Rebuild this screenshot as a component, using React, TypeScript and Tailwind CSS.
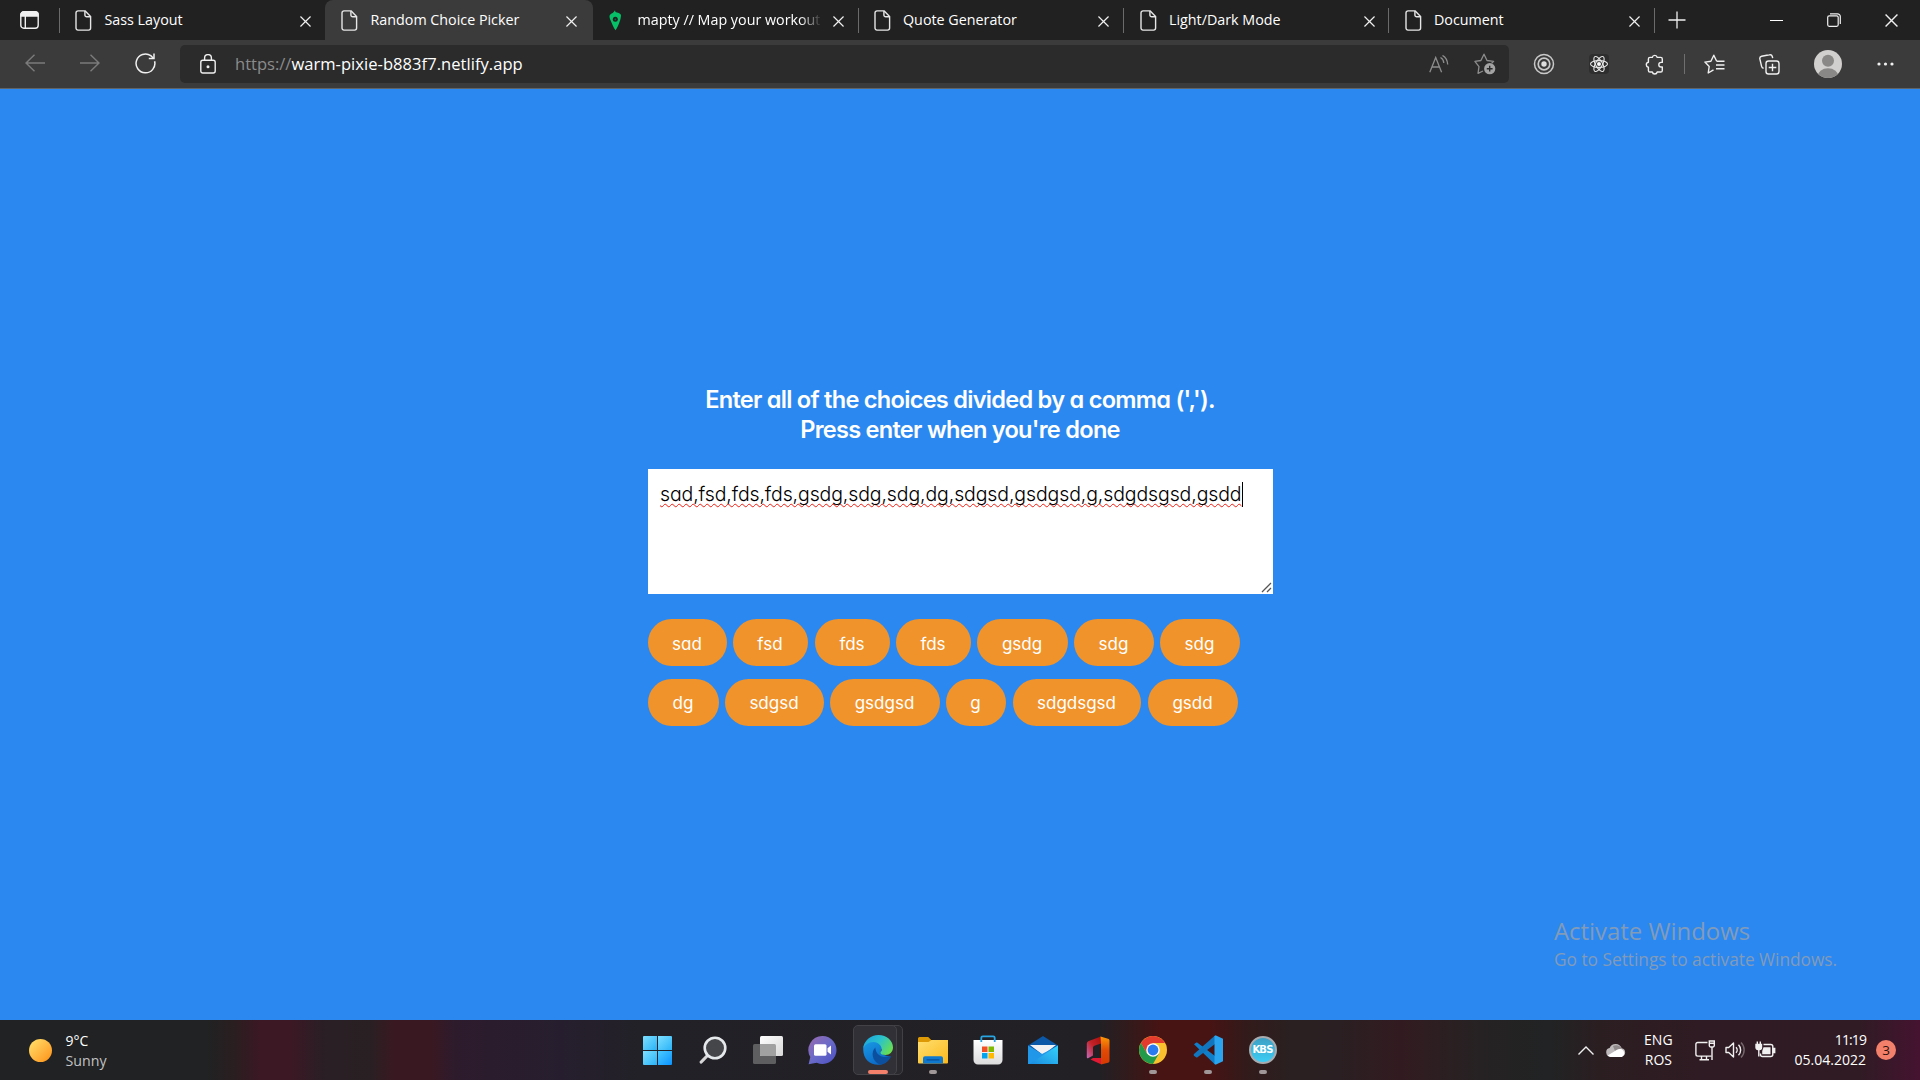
import React from 'react';

const tabs = [
  { title: 'Sass Layout', kind: 'file', box: 'w-[265px] pl-[15px]', divider: false },
  { title: 'Random Choice Picker', kind: 'file', box: 'w-[268px] rounded-t-lg bg-[#3b3b3b] pl-[16px]', divider: false },
  { title: 'mapty // Map your workout', kind: 'pin', box: 'w-[265.500px] pl-[14.500px]', divider: true },
  { title: 'Quote Generator', kind: 'file', box: 'w-[265.500px] pl-[15px]', divider: true },
  { title: 'Light/Dark Mode', kind: 'file', box: 'w-[265px] pl-[15.500px]', divider: true },
  { title: 'Document', kind: 'file', box: 'w-[265.500px] pl-[15.500px]', divider: true },
];

const rows: { label: string; width: string }[][] = [
  [
    { label: 'sad', width: 'w-[79px] mr-[6px]' },
    { label: 'fsd', width: 'w-[75px] mr-[7px]' },
    { label: 'fds', width: 'w-[75px] mr-[6px]' },
    { label: 'fds', width: 'w-[75px] mr-[6px]' },
    { label: 'gsdg', width: 'w-[91px] mr-[6px]' },
    { label: 'sdg', width: 'w-[80px] mr-[6px]' },
    { label: 'sdg', width: 'w-[80px]' },
  ],
  [
    { label: 'dg', width: 'w-[71px] mr-[6px]' },
    { label: 'sdgsd', width: 'w-[99px] mr-[6px]' },
    { label: 'gsdgsd', width: 'w-[110px] mr-[6px]' },
    { label: 'g', width: 'w-[60px] mr-[7px]' },
    { label: 'sdgdsgsd', width: 'w-[128px] mr-[7px]' },
    { label: 'gsdd', width: 'w-[90px]' },
  ],
];

function FileIcon() {
  return (
    <svg width="17" height="21" viewBox="0 0 17 21" fill="none" stroke="#e6e6e6" strokeWidth="1.4" className="shrink-0">
      <path d="M3 .9h7.2l5.4 5.6v11.6a2 2 0 0 1-2 2H3a2 2 0 0 1-2-2V2.9a2 2 0 0 1 2-2z" />
      <path d="M9.9 1v4a1.8 1.8 0 0 0 1.8 1.8h3.9" />
    </svg>
  );
}

function PinIcon() {
  return (
    <svg width="17" height="21" viewBox="0 0 17 21" className="shrink-0">
      <path d="M7 .2c.3 1.500.5 2.200 2 2.200 2.700.5 4 1.600 4 3.100-.1 1.600-.5 4-1.500 6.500-1 3-2.400 6-4 8.200C5.500 17.500 4.300 14.500 3.300 12 2.200 9.500 1.600 8 1.500 6.500 1.500 3.500 5.500 3.500 7 .2z" fill="#06c167" />
      <circle cx="7.300" cy="9.300" r="2.500" fill="#212121" />
      <circle cx="7.300" cy="9.300" r=".9" fill="#0a6a40" />
    </svg>
  );
}

function Cross({ size }: { size: number }) {
  return (
    <svg width={size} height={size} viewBox="0 0 12 12" stroke="#f0f0f0" strokeWidth="1.3" className="shrink-0">
      <path d="M.5.5l11 11M11.500.5l-11 11" />
    </svg>
  );
}

function TabStrip() {
  return (
    <div className="flex h-10 bg-[#212121] text-[14.3px] text-white">
      <div className="flex w-[60px] shrink-0 items-center justify-between pl-[20px]">
        <svg width="19" height="18" viewBox="0 0 19 18" fill="none" stroke="#f0f0f0" strokeWidth="1.4">
          <rect x=".8" y=".8" width="17.4" height="16.4" rx="3" />
          <path d="M1 3.500a2.500 2.500 0 0 1 2.500-2.500h12A2.500 2.500 0 0 1 18 3.500V5H1z" fill="#f0f0f0" />
          <path d="M5.300 5v12" />
        </svg>
        <div className="h-[25px] w-px bg-[#6b6b6b]" />
      </div>
      {tabs.map((t) => (
        <div key={t.title} className={`${t.box} flex shrink-0 items-center`}>
          {t.kind === 'file' ? <FileIcon /> : <PinIcon />}
          <div
            className={
              t.kind === 'pin'
                ? 'ml-[13px] w-[184px] shrink-0 whitespace-nowrap [mask-image:linear-gradient(to_right,#000_88%,transparent)]'
                : 'ml-[12.500px] w-[184px] shrink-0 whitespace-nowrap'
            }
          >
            {t.title}
          </div>
          <div className="ml-[11px] flex w-[11px] shrink-0 pt-0.5">
            <Cross size={11} />
          </div>
          {t.divider && <div className="ml-auto h-[25px] w-px bg-[#6b6b6b]" />}
        </div>
      ))}
      <div className="flex flex-1 items-center pl-[13px]">
        <svg width="18" height="18" viewBox="0 0 18 18" stroke="#f0f0f0" strokeWidth="1.3">
          <path d="M9 .5v17M.5 9h17" />
        </svg>
      </div>
      <div className="flex w-[150px] shrink-0 items-center justify-between pr-[22px]">
        <div className="h-px w-[13px] bg-white" />
        <svg width="14" height="14" viewBox="0 0 14 14" fill="none" stroke="#f0f0f0" strokeWidth="1.2">
          <rect x=".7" y="2.800" width="10.500" height="10.500" rx="1.500" />
          <path d="M3 .8h7.500a2.800 2.800 0 0 1 2.800 2.800V11" />
        </svg>
        <Cross size={13} />
      </div>
    </div>
  );
}

function Toolbar() {
  return (
    <div className="flex h-[49px] items-center border-b border-[#5f6468] bg-[#3b3b3b] pl-[25px]">
      <svg width="20" height="18" viewBox="0 0 20 18" fill="none" stroke="#7b7b7b" strokeWidth="1.4" className="mr-[35px] mb-0.5">
        <path d="M9.500.7L1 9l8.500 8.300M1 9h19" />
      </svg>
      <svg width="20" height="18" viewBox="0 0 20 18" fill="none" stroke="#7b7b7b" strokeWidth="1.4" className="mr-[35px] mb-0.5">
        <path d="M10.500.7L19 9l-8.500 8.300M19 9H0" />
      </svg>
      <svg width="21" height="21" viewBox="0 0 21 21" fill="none" stroke="#f0f0f0" strokeWidth="1.5" className="mr-[24px] mb-px">
        <path d="M19.600 8.200A9.400 9.400 0 1 1 15.800 2.700l2.600 2.500" />
        <path d="M19 .6v5h-5.200" />
      </svg>
      <div className="flex h-[38px] w-[1329px] shrink-0 items-center rounded-[5px] bg-[#2b2b2b] pl-[19.500px] text-[16.550px]">
        <svg width="16" height="20" viewBox="0 0 16 20" fill="none" stroke="#f0f0f0" strokeWidth="1.4" className="mr-[19.500px] mb-px">
          <rect x=".8" y="6.300" width="14.400" height="12.700" rx="2" />
          <path d="M4.600 6.300V4a3.400 3.400 0 0 1 6.800 0v2.300" />
          <circle cx="8" cy="12.700" r=".8" fill="#f0f0f0" />
        </svg>
        <div className="flex-1 whitespace-nowrap text-white">
          <span className="text-[#8b8b8b]">https://</span>
          <span className="tracking-[0.040px]">warm-pixie-b883f7.netlify.app</span>
        </div>
        <svg width="20" height="18" viewBox="0 0 20 18" fill="none" stroke="#8d8d8d" strokeWidth="1.3" className="mr-[25px] mb-px">
          <path d="M.8 17.200L6.700 2.600l5.900 14.600M2.900 12h7.600" />
          <path d="M11.500 2.500c2 1 3.200 3 3.300 5.500M13.500.5c3.200 1.700 4.900 4.900 5.200 9" />
        </svg>
        <svg width="22" height="22" viewBox="0 0 22 22" fill="none" stroke="#8d8d8d" strokeWidth="1.3" className="mr-[13px]">
          <path d="M9 18l-5 2.300 1-6.700L.9 8.400l6-.9L10 1.200l3 6.300 6.600.9-2 1.900" strokeLinejoin="round" />
          <circle cx="15.700" cy="15.700" r="5.600" fill="#a3a3a3" stroke="none" />
          <path d="M15.700 12.800v5.800M12.800 15.700h5.800" stroke="#2b2b2b" strokeWidth="1.400" />
        </svg>
      </div>
      <div className="flex flex-1 items-center pl-[24px]">
        <svg width="22" height="22" viewBox="0 0 22 22" fill="none" stroke="#c9c9c9" className="mr-[34px]">
          <circle cx="11" cy="11" r="9.500" strokeWidth="1.500" />
          <circle cx="11" cy="11" r="5.800" strokeWidth="1.700" />
          <circle cx="11" cy="11" r="2.700" fill="#dedede" stroke="none" />
        </svg>
        <div className="mr-[35px] flex size-5 items-center justify-center rounded-sm bg-[#2e2e2e]">
          <svg width="20" height="20" viewBox="0 0 20 20" fill="none" stroke="#e8e8e8" strokeWidth="1.100">
            <ellipse cx="10" cy="10" rx="8.500" ry="3.400" />
            <ellipse cx="10" cy="10" rx="8.500" ry="3.400" transform="rotate(60 10 10)" />
            <ellipse cx="10" cy="10" rx="8.500" ry="3.400" transform="rotate(120 10 10)" />
            <circle cx="10" cy="10" r="1.500" fill="#fff" />
          </svg>
        </div>
        <svg width="20" height="21" viewBox="0 0 20 21" fill="none" stroke="#f0f0f0" strokeWidth="1.400" strokeLinejoin="round" className="mr-[20px]">
          <path d="M6 3.400h2.300a2.500 2.500 0 0 1 4.900 0h3.500a1.600 1.600 0 0 1 1.600 1.600v3.400h-1.200a2.300 2.300 0 0 0 0 4.600h1.200v3.400a1.600 1.600 0 0 1-1.600 1.600h-3.500a2.500 2.500 0 0 1-4.900 0H6a1.600 1.600 0 0 1-1.600-1.600v-3.100a2.600 2.600 0 0 1 0-5.100V5A1.600 1.600 0 0 1 6 3.400z" />
        </svg>
        <div className="mr-[19px] h-5 w-px bg-[#6f6f6f]" />
        <svg width="21" height="20" viewBox="0 0 21 20" fill="none" stroke="#f0f0f0" strokeWidth="1.400" strokeLinejoin="round" className="mr-[34px]">
          <path d="M9.500 15.800L4.200 19l1-6.500L.9 8.100l6-.9L9.800 1.200l2.900 6M12.700 7.200h7.800M12 11h8.500M12 14.700h8.500" />
        </svg>
        <svg width="21" height="21" viewBox="0 0 21 21" fill="none" stroke="#f0f0f0" strokeWidth="1.400" className="mr-[34px]">
          <rect x="7" y="7" width="13" height="13" rx="2.500" />
          <path d="M13.500 9.700v7.600M9.700 13.500h7.600M4.600 14.200a2.500 2.500 0 0 1-2-1.900L.9 5.100a2.400 2.400 0 0 1 1.700-2.900L10.500.8a2.400 2.400 0 0 1 2.800 1.700l.4 1.600" />
        </svg>
        <svg width="28" height="28" viewBox="0 0 28 28" className="mr-[34.500px]">
          <clipPath id="avatar"><circle cx="14" cy="14" r="14" /></clipPath>
          <g clipPath="url(#avatar)">
            <rect width="28" height="28" fill="#d2d0ce" />
            <circle cx="14" cy="10.800" r="6" fill="#8a8886" />
            <ellipse cx="14" cy="26.500" rx="10.500" ry="8.200" fill="#8a8886" />
          </g>
        </svg>
        <svg width="17" height="4" viewBox="0 0 17 4" fill="#f0f0f0">
          <circle cx="2" cy="2" r="1.600" />
          <circle cx="8.500" cy="2" r="1.600" />
          <circle cx="15" cy="2" r="1.600" />
        </svg>
      </div>
    </div>
  );
}

function Picker() {
  return (
    <main className="relative flex h-[931px] flex-col items-center bg-[#2b88f0] pt-[296px] [font-family:Inter,sans-serif] [font-feature-settings:'cv11']">
      <h3 className="text-center text-[23.600px] leading-[30px] font-semibold text-white">
        <div className="tracking-[-0.740px]">Enter all of the choices divided by a comma (',').</div>
        <div className="tracking-[-0.740px]">Press enter when you're done</div>
      </h3>
      <div className="relative mt-[24px] h-[125px] w-[625px] bg-white px-[12.500px] pt-[13px]">
        <div className="flex items-center text-[19.500px] leading-[25px] font-light tracking-[-0.110px] whitespace-nowrap text-black">
          <span className="underline decoration-[#f01c10] decoration-wavy decoration-1 underline-offset-[2px] [text-decoration-skip-ink:none]">
            sad,fsd,fds,fds,gsdg,sdg,sdg,dg,sdgsd,gsdgsd,g,sdgdsgsd,gsdd
          </span>
          <div className="h-[25px] w-px bg-black" />
        </div>
        <svg width="11" height="11" viewBox="0 0 11 11" stroke="#555" strokeWidth="1.300" className="absolute right-[1px] bottom-[1px]">
          <path d="M1 10L10 1M6 10l4-4" />
        </svg>
      </div>
      <div className="mt-[25px] flex w-[625px] flex-col gap-[13px] text-[17px] text-white">
        {rows.map((row, i) => (
          <div key={i} className="flex">
            {row.map((tag, j) => (
              <div
                key={j}
                className={`${tag.width} ${i === 0 ? 'pt-[4px]' : 'pt-0.5'} flex h-[47px] items-center justify-center rounded-full bg-[#f0932b]`}
              >
                {tag.label}
              </div>
            ))}
          </div>
        ))}
      </div>
      <div className="absolute top-[825px] left-[1554px] whitespace-nowrap text-[#829bb9] [font-family:'Open_Sans',sans-serif]">
        <div className="text-[23.900px] leading-[34px]">Activate Windows</div>
        <div className="text-[17.300px] leading-[24px]">Go to Settings to activate Windows.</div>
      </div>
    </main>
  );
}

function Slot({ children, dot }: { children: React.ReactNode; dot?: boolean }) {
  return (
    <div className="relative flex h-[60px] w-[55px] items-center justify-center">
      {children}
      {dot && <div className="absolute bottom-[6px] left-[24px] h-1 w-2 rounded-full bg-[#9f9798]" />}
    </div>
  );
}

function TaskIcons() {
  return (
    <div className="flex">
      <Slot>
        <svg width="29" height="29" viewBox="0 0 29 29">
          <defs>
            <linearGradient id="win" x1="0" y1="0" x2="1" y2="1"><stop stopColor="#7de0ff" /><stop offset="1" stopColor="#2ab3f8" /></linearGradient>
            <linearGradient id="win2" x1="0" y1="0" x2="1" y2="1"><stop stopColor="#4ccbff" /><stop offset="1" stopColor="#0a93ff" /></linearGradient>
          </defs>
          <path d="M1 0h13v14H0V1a1 1 0 0 1 1-1z" fill="url(#win)" />
          <path d="M15 0h13a1 1 0 0 1 1 1v13H15z" fill="url(#win)" />
          <path d="M0 15h14v14H1a1 1 0 0 1-1-1z" fill="url(#win)" />
          <path d="M15 15h14v13a1 1 0 0 1-1 1H15z" fill="url(#win2)" />
        </svg>
      </Slot>
      <Slot>
        <svg width="28" height="28" viewBox="0 0 28 28" fill="none">
          <path d="M9.500 18.500L2.200 26" stroke="#d6d6d6" strokeWidth="3.200" strokeLinecap="round" />
          <circle cx="16" cy="12" r="10.300" fill="#454649" stroke="#e6e9ec" strokeWidth="2.600" />
        </svg>
      </Slot>
      <Slot>
        <svg width="30" height="28" viewBox="0 0 30 28">
          <defs><linearGradient id="tv" x1="0" y1="0" x2="1" y2="1"><stop stopColor="#fff" /><stop offset="1" stopColor="#d8d8d8" /></linearGradient></defs>
          <rect y="8" width="23" height="20" rx="1.500" fill="#5e5e60" />
          <rect x="7" width="23" height="20" rx="1.500" fill="url(#tv)" />
          <path d="M7 8h14.500A1.500 1.500 0 0 1 23 9.500V20H8.500A1.500 1.500 0 0 1 7 18.500z" fill="#a1a1a2" />
        </svg>
      </Slot>
      <Slot>
        <svg width="29" height="29" viewBox="0 0 29 29">
          <defs><linearGradient id="chat" x1="0" y1="0" x2="1" y2="1"><stop stopColor="#9a6aae" /><stop offset=".5" stopColor="#6a6ac8" /><stop offset="1" stopColor="#4a4fc4" /></linearGradient></defs>
          <path d="M14.500 0a14 14 0 1 1-5.700 26.800L.6 28.200 2.300 21A14 14 0 0 1 14.500 0z" fill="url(#chat)" />
          <rect x="6" y="8.200" width="12.500" height="11.500" rx="1.500" fill="#fff" />
          <path d="M19.500 12.300l3.500-2.800v9l-3.500-2.800z" fill="#fff" />
        </svg>
      </Slot>
      <Slot>
        <div className="absolute top-[5px] left-[9px] h-[50px] w-[44px] rounded-[5px] border border-[#414045] bg-[#2a292e]" />
        <div className="absolute top-[5px] left-[3px] h-[50px] w-[44px] rounded-[5px] border border-[#434247] bg-[#313036]" />
        <svg width="30" height="30" viewBox="0 0 30 30" className="relative">
          <defs>
            <linearGradient id="edgeTop" x1="0" y1=".2" x2="1" y2=".7"><stop stopColor="#1ba5e0" /><stop offset=".5" stopColor="#2cc3c9" /><stop offset="1" stopColor="#6be04a" /></linearGradient>
            <linearGradient id="edgeLow" x1="0" y1="0" x2=".6" y2="1"><stop stopColor="#1a9fe8" /><stop offset="1" stopColor="#0b66c4" /></linearGradient>
          </defs>
          <path d="M.2 14C.5 6 8 2 15 5c5 2 6 7 3 10-1 3 3 6 9.500 6.500C25 27 20.500 29.800 15 29.800 7 29.800 0 24 .2 14z" fill="url(#edgeLow)" />
          <path d="M12.300 12.500C8 16.500 8.500 26 17 29.700c4.800-.5 8.500-3.500 10.800-7.700.3-.7-.3-1-1-.7-6 2.200-14-.3-14.500-8.800z" fill="#0c4f9e" />
          <path d="M.3 13.500C1 5.500 7.500 0 15.500 0 24 0 30 6 30 12.500c0 4.500-3.500 7.500-7.500 7.500-3 0-5-1-5-2.300 0-.8 1.200-1.200 1.200-3.400 0-3.300-3.200-7.300-8.200-7.300C5.500 7 1.500 10 .3 13.500z" fill="url(#edgeTop)" />
        </svg>
        <div className="absolute bottom-[6px] left-[18px] h-1 w-5 rounded-full bg-[#f3806a]" />
      </Slot>
      <Slot dot>
        <svg width="30" height="28" viewBox="0 0 30 28">
          <defs><linearGradient id="folder" x1="0" y1="0" x2="1" y2="1"><stop stopColor="#ffdf70" /><stop offset="1" stopColor="#fbb91c" /></linearGradient></defs>
          <path d="M1.500 1h8.700l3 3H28v6H0V2.500A1.500 1.500 0 0 1 1.500 1z" fill="#dd9a06" />
          <path d="M0 6h10.500l3-2H30v22.500a1 1 0 0 1-1 1H1a1 1 0 0 1-1-1z" fill="url(#folder)" />
          <path d="M5 27.500v-5.300a2 2 0 0 1 2-2h16a2 2 0 0 1 2 2v5.300z" fill="#0f78cf" />
          <path d="M9 23.800h12" stroke="#0a4f98" strokeWidth="1.200" strokeLinecap="round" />
        </svg>
      </Slot>
      <Slot>
        <svg width="30" height="30" viewBox="0 0 30 30">
          <defs><linearGradient id="store" x1="0" y1="0" x2="0" y2="1"><stop stopColor="#fff" /><stop offset="1" stopColor="#dcdcdc" /></linearGradient></defs>
          <path d="M.5 5h29v20a4.500 4.500 0 0 1-4.500 4.500H5A4.500 4.500 0 0 1 .5 25z" fill="url(#store)" />
          <path d="M8.300 7V2.800a1.500 1.500 0 0 1 1.500-1.500h10.400a1.500 1.500 0 0 1 1.500 1.500V7" fill="none" stroke="#27a6e3" strokeWidth="1.800" />
          <path d="M9 11.500h5.500V17H9z" fill="#f25022" />
          <path d="M15.500 11.500H21V17h-5.500z" fill="#7fba00" />
          <path d="M9 18h5.500v5.500H9z" fill="#00a4ef" />
          <path d="M15.500 18H21v5.500h-5.500z" fill="#ffb900" />
        </svg>
      </Slot>
      <Slot>
        <svg width="30" height="28" viewBox="0 0 30 28">
          <defs><linearGradient id="mail" x1="1" y1="0" x2="0" y2="1"><stop stopColor="#35d2fb" /><stop offset="1" stopColor="#1a8be0" /></linearGradient></defs>
          <path d="M0 9.500L15 0l15 9.500V18H0z" fill="#0b57a8" />
          <path d="M2 9h26L15 19z" fill="#f1f1f4" />
          <path d="M0 9.500L14 18l16-8.500V28H0z" fill="#2097e8" />
          <path d="M30 9.500L1.500 28H30z" fill="url(#mail)" />
        </svg>
      </Slot>
      <Slot>
        <svg width="24" height="29" viewBox="0 0 24 29">
          <defs>
            <linearGradient id="off" x1="1" y1="0" x2="0" y2="1"><stop stopColor="#a80f10" /><stop offset=".5" stopColor="#c42328" /><stop offset="1" stopColor="#c56aba" /></linearGradient>
            <linearGradient id="off2" x1="0" y1="0" x2="0" y2="1"><stop stopColor="#fb9a06" /><stop offset=".5" stopColor="#e24a06" /><stop offset="1" stopColor="#d43a02" /></linearGradient>
          </defs>
          <path d="M15 .5v7L9 9.500c-1.500.5-2 1.300-2 2.500v7.500l-5 2.800C1 22.500.8 21.500.8 20.500V8c0-1.500.7-2.400 2-3z" fill="url(#off)" />
          <path d="M14.500.5L22 2.700c1 .3 1.500 1 1.500 2v20c0 1-.5 1.600-1.500 2l-7 1.800V8z" fill="url(#off2)" />
          <path d="M4.500 23.500L7 22h8v6.300z" fill="#e01a35" />
        </svg>
      </Slot>
      <Slot dot>
        <svg width="28" height="28" viewBox="0 0 28 28">
          <circle cx="14" cy="14" r="14" fill="#fbc02d" />
          <path d="M1.900 7A14 14 0 0 1 26.100 7H14L8 17.500z" fill="#e33b2e" />
          <path d="M1.900 7A14 14 0 0 0 14 28l6-10.500H8z" fill="#219a4a" />
          <circle cx="14" cy="14" r="6.800" fill="#fff" />
          <circle cx="14" cy="14" r="5.400" fill="#2b7bf0" />
        </svg>
      </Slot>
      <Slot dot>
        <svg width="30" height="30" viewBox="0 0 30 30">
          <path d="M1 9.300l2-1.600c.5-.4 1.100-.3 1.500 0L22 21v8.500z" fill="#0f7fcb" />
          <path d="M1 20.700l2 1.600c.5.400 1.100.3 1.500 0L22 9V.5L1 19c-.5.500-.5 1.200 0 1.700z" fill="#1176bd" />
          <path d="M22.500.3L30 3.800v22.400l-7.500 3.500-1-1V1.300z" fill="#2ba4ef" />
        </svg>
      </Slot>
      <Slot dot>
        <div className="flex size-[28px] items-center justify-center rounded-full border-2 border-[#a8aaad] bg-linear-to-b from-[#3d9fc4] to-[#3ccdf5] text-[10px] font-bold tracking-[-0.800px] text-white [font-family:'DejaVu_Sans',sans-serif]">
          KBS
        </div>
      </Slot>
    </div>
  );
}

function Taskbar() {
  return (
    <div className="flex h-[60px] items-center bg-[linear-gradient(to_right,#202223_0px,#202223_205px,#2a1e20_235px,#3b1824_260px,#3b1824_292px,#291f25_325px,#292023_370px,#3a1821_395px,#3a1821_430px,#2d1b2c_455px,#261e2e_560px,#222127_640px,#222024_1100px,#331a1b_1130px,#471313_1160px,#471313_1210px,#331a1a_1245px,#2a2021_1290px,#2a1f22_1340px,#321b20_1400px,#262223_1480px,#212324_1550px,#2b1e21_1600px,#2f1b23_1700px,#301b24_1860px,#451330_1920px)] text-[14px] leading-[20px] text-white">
      <div className="flex w-[630px] items-center pl-[29px]">
        <div className="size-[23px] rounded-full bg-linear-to-br from-[#ffe36b] to-[#ff8f00]" />
        <div className="ml-[13.500px] pt-px">
          <div>9°C</div>
          <div className="text-[14.200px] text-[#c3c3c3]">Sunny</div>
        </div>
      </div>
      <TaskIcons />
      <div className="ml-auto flex items-center pr-[24px]">
        <svg width="16" height="9" viewBox="0 0 16 9" fill="none" stroke="#f0f0f0" strokeWidth="1.400" className="mr-[12px]">
          <path d="M.5 8.500L8 1l7.500 7.500" />
        </svg>
        <svg width="20" height="13" viewBox="0 0 20 13" className="mr-[18px]">
          <path d="M4.500 12.500A4.300 4.300 0 0 1 3.600 4 6.500 6.500 0 0 1 15.700 4.300 4.200 4.200 0 0 1 16 12.500z" fill="#bdb8ba" />
          <path d="M7 2a6.500 6.500 0 0 1 8.700 2.300L9 7z" fill="#8f898b" />
          <path d="M1.700 11.500L11 5.800c1.500-1 3-.9 4.700-.5a4.200 4.200 0 0 1 .3 7.600H4.500c-1.300 0-2.200-.7-2.800-1.400z" fill="#fff" />
        </svg>
        <div className="mr-[22px] flex flex-col items-center">
          <div>ENG</div>
          <div>ROS</div>
        </div>
        <svg width="21" height="21" viewBox="0 0 21 21" fill="none" stroke="#f0f0f0" strokeWidth="1.400" className="mr-[9px]">
          <path d="M12.500 2.500H2.700A1.800 1.800 0 0 0 .9 4.300v10a1.800 1.800 0 0 0 1.800 1.800h13.800M6.500 16v3.500M11.500 16v3.500M4.500 19.700h9.500" />
          <path d="M14.300 1h5v4.500a1.500 1.500 0 0 1-1.500 1.500h-2a1.500 1.500 0 0 1-1.500-1.500zM14.300 3.300h5M17 7.300V20" />
        </svg>
        <svg width="20" height="18" viewBox="0 0 20 18" fill="none" stroke="#f0f0f0" strokeWidth="1.400" className="mr-[10px]">
          <path d="M1 6.500h2.700L8.500 2v14l-4.800-4.500H1z" strokeLinejoin="round" />
          <path d="M11 6.200a4 4 0 0 1 0 5.600M13.500 3.800a7.400 7.400 0 0 1 0 10.400" />
          <path d="M16 1.500a10.500 10.500 0 0 1 0 15" stroke="#75686d" />
        </svg>
        <svg width="21" height="17" viewBox="0 0 21 17" fill="none" stroke="#f0f0f0" strokeWidth="1.400" className="mr-[19px] mb-0.5">
          <path d="M8.500 3.500h7.300a2 2 0 0 1 2 2v8a2 2 0 0 1-2 2H7.500a2 2 0 0 1-2-2v-1" />
          <path d="M18 7.500h1.700v4H18z" fill="#f0f0f0" />
          <path d="M8.500 6.200h7v7H7.200V10z" fill="#f0f0f0" stroke="none" />
          <path d="M1 3.500h5.500v3a2 2 0 0 1-2 2H3a2 2 0 0 1-2-2z" fill="#f0f0f0" />
          <path d="M2.300 3V.5M5.300 3V.5M3.800 8.500v7" />
        </svg>
        <div className="mr-[10px] flex flex-col items-end">
          <div className="tracking-[-0.900px]">11:19</div>
          <div>05.04.2022</div>
        </div>
        <div className="flex size-5 items-center justify-center rounded-full bg-[#f3806a] text-[13.500px] text-[#2a1010]">3</div>
      </div>
    </div>
  );
}

export default function App() {
  return (
    <div className="h-[1080px] w-[1920px] overflow-hidden [font-family:'Open_Sans',sans-serif]">
      <TabStrip />
      <Toolbar />
      <Picker />
      <Taskbar />
    </div>
  );
}
